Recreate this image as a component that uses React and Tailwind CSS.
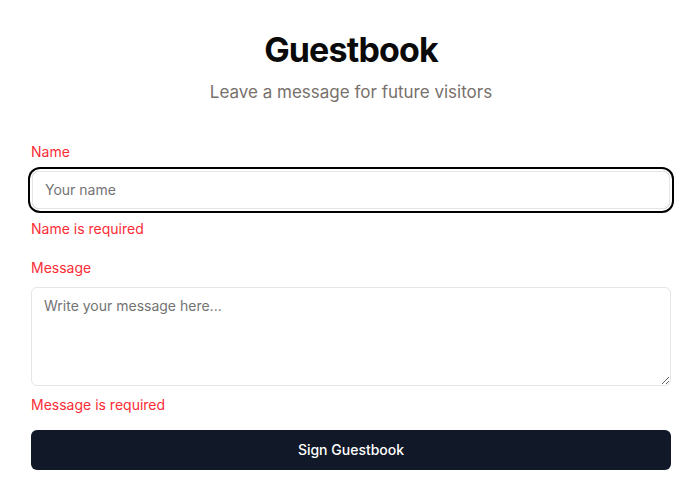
import { useState } from 'react';

export default function App() {
  const [name, setName] = useState('');
  const [message, setMessage] = useState('');

  return (
    <div className="min-h-screen bg-white font-['Inter',sans-serif]">
      <div className="w-[640px] ml-[31px] pt-[30px]">
        {/* Encabezado */}
        <div className="text-center">
          <h1 className="text-[34px] leading-[40px] font-bold tracking-tight text-[#0a0a0a]">Guestbook</h1>
          <p className="mt-[10px] text-[17px] text-[#78716c]">Leave a message for future visitors</p>
        </div>

        <form className="mt-[36px]" onSubmit={(e) => e.preventDefault()}>
          {/* Nombre */}
          <label className="block text-sm text-[#fb2c36]">Name</label>
          <div className="mt-[9px] rounded-[8px] ring-2 ring-black ring-offset-2 ring-offset-white mx-[1px]">
            <input
              value={name}
              onChange={(e) => setName(e.target.value)}
              placeholder="Your name"
              className="block w-full h-[38px] rounded-[6px] border border-[#e5e5e5] px-3 text-sm text-gray-900 placeholder:text-[#737373] outline-none"
            />
          </div>
          <p className="mt-[10px] text-sm text-[#fb2c36]">Name is required</p>

          {/* Mensaje */}
          <label className="block mt-[19px] text-sm text-[#fb2c36]">Message</label>
          <textarea
            value={message}
            onChange={(e) => setMessage(e.target.value)}
            placeholder="Write your message here..."
            className="block mt-[9px] w-full h-[99px] rounded-[6px] border border-[#e5e5e5] px-3 py-2 text-sm text-gray-900 placeholder:text-[#737373] outline-none"
          />
          <p className="mt-[9px] text-sm text-[#fb2c36]">Message is required</p>

          <button
            type="submit"
            className="mt-[15px] w-full h-[40px] rounded-[6px] bg-[#111827] text-sm font-medium text-white"
          >
            Sign Guestbook
          </button>
        </form>
      </div>
    </div>
  );
}
